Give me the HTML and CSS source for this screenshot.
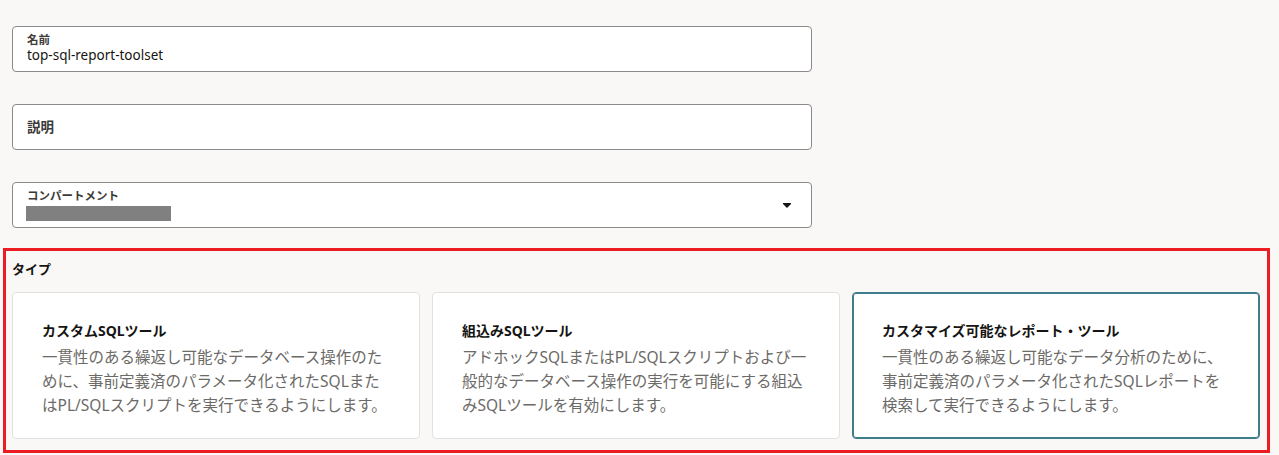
FILE: index.html
```html
<!DOCTYPE html>
<html lang="ja">
<head>
    <meta charset="UTF-8">
    <meta name="viewport" content="width=device-width, initial-scale=1.0">
    <title>ツールセットの作成</title>
    <link rel="stylesheet" href="styles.css">
</head>
<body>

    <div class="form">
        <!-- Name -->
        <div class="field">
            <div class="field-body">
                <span class="field-label">名前</span>
                <span class="field-value">top-sql-report-toolset</span>
            </div>
        </div>

        <!-- Description (empty) -->
        <div class="field">
            <div class="field-body">
                <span class="field-placeholder">説明</span>
            </div>
        </div>

        <!-- Compartment select -->
        <div class="field field-select">
            <div class="field-body">
                <span class="field-label">コンパートメント</span>
                <span class="masked"></span>
            </div>
            <svg class="caret" width="8" height="5" viewBox="0 0 8 5">
                <path d="M0 0h8v1L4 5 0 1z" fill="#161513"/>
            </svg>
        </div>
    </div>

    <!-- Toolset type -->
    <div class="type-section">
        <div class="type-label">タイプ</div>
        <div class="type-cards">
            <div class="type-card">
                <div class="card-title">カスタムSQLツール</div>
                <div class="card-text">一貫性のある繰返し可能なデータベース操作のた<br>めに、事前定義済のパラメータ化されたSQLまた<br>はPL/SQLスクリプトを実行できるようにします。</div>
            </div>
            <div class="type-card">
                <div class="card-title">組込みSQLツール</div>
                <div class="card-text">アドホックSQLまたはPL/SQLスクリプトおよび一<br>般的なデータベース操作の実行を可能にする組込<br>みSQLツールを有効にします。</div>
            </div>
            <div class="type-card selected">
                <div class="card-title">カスタマイズ可能なレポート・ツール</div>
                <div class="card-text">一貫性のある繰返し可能なデータ分析のために、<br>事前定義済のパラメータ化されたSQLレポートを<br>検索して実行できるようにします。</div>
            </div>
        </div>
    </div>

</body>
</html>
```

FILE: styles.css
```css
/* Base */
* {
    margin: 0;
    padding: 0;
    box-sizing: border-box;
}

body {
    font-family: "Noto Sans", "Noto Sans CJK JP", sans-serif;
    background-color: #f9f8f7;
    color: #161513;
    width: 1279px;
    height: 455px;
    overflow: hidden;
}

/* Text fields */
.form {
    width: 800px;
    margin-left: 12px;
    padding-top: 26px;
    display: flex;
    flex-direction: column;
    gap: 32px;
}

.field {
    height: 46px;
    background-color: #fff;
    border: 1px solid #8c8b89;
    border-radius: 4px;
    padding: 6px 14px 0;
    display: flex;
}

.field-body {
    display: flex;
    flex-direction: column;
}

.field-label {
    font-size: 11.5px;
    line-height: 14px;
    font-weight: 700;
    color: #3d3b39;
}

.field-value {
    font-size: 13.5px;
    line-height: 17px;
}

.field-placeholder {
    font-size: 13.5px;
    line-height: 32px;
    font-weight: 700;
    color: #3d3b39;
}

.masked {
    display: block;
    width: 145px;
    height: 15px;
    margin: 3px 0 0 -1px;
    background-color: #808080;
}

.field-select {
    align-items: flex-start;
}

.caret {
    margin: 14px 6px 0 auto;
}

/* Type selection */
.type-section {
    margin: 20px 9px 0 3px;
    border: 3px solid #ec1c24;
    padding: 10px 7px 11px 6px;
}

.type-label {
    font-size: 13px;
    line-height: 16px;
    font-weight: 700;
}

.type-cards {
    margin-top: 15px;
    display: grid;
    grid-template-columns: repeat(3, 408px);
    gap: 12px;
}

.type-card {
    height: 147px;
    background-color: #fff;
    border: 1px solid #e3e1df;
    border-radius: 4px;
    padding: 28px 29px 0;
}

.type-card.selected {
    border-color: #3f7d8d;
    box-shadow: inset 0 0 0 1px #3f7d8d;
}

.card-title {
    font-size: 14px;
    line-height: 20px;
    font-weight: 700;
}

.card-text {
    margin-top: 4px;
    font-size: 15.5px;
    line-height: 24px;
    color: #6c6a67;
    white-space: nowrap;
}
```
